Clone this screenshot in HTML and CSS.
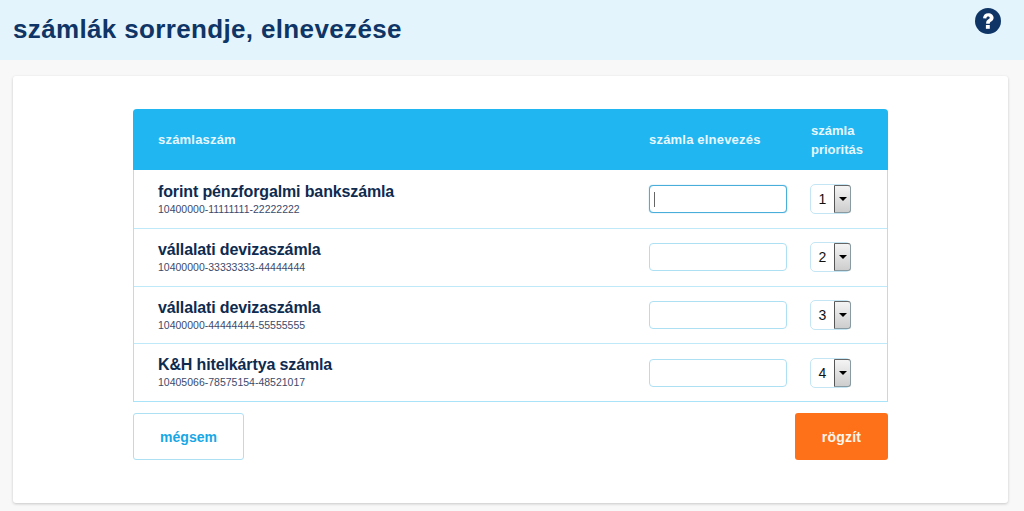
FILE: index.html
```html
<!DOCTYPE html>
<html lang="hu">
<head>
<meta charset="utf-8">
<title>számlák sorrendje, elnevezése</title>
<link rel="stylesheet" href="styles.css">
</head>
<body>
<header class="top">
  <h1 class="title">számlák sorrendje, elnevezése</h1>
  <svg class="help" viewBox="0 0 26 26" width="26" height="26" aria-label="súgó">
    <circle cx="13" cy="13" r="13" fill="#0f3566"/>
    <path d="M8 10.200C8.200 7.100 10.300 5.200 13.300 5.200c3 0 5.300 1.800 5.300 4.500 0 2-1.100 3-2.500 3.900-1 .7-1.300 1.100-1.300 2.200h-3.700c0-2.300.6-3.300 2-4.200 1-.7 1.600-1.100 1.600-1.800 0-.8-.7-1.300-1.500-1.300-1 0-1.700.6-1.900 1.900z" fill="#fff"/>
    <rect x="10.900" y="17" width="3.900" height="3.800" fill="#fff"/>
  </svg>
</header>
<main class="card">
  <section class="table">
    <div class="row head">
      <div class="c-acc">számlaszám</div>
      <div class="c-name">számla elnevezés</div>
      <div class="c-pri">számla<br>prioritás</div>
    </div>
    <div class="row row-1">
      <div class="c-acc"><div class="acc-name">forint pénzforgalmi bankszámla</div><div class="acc-no">10400000-11111111-22222222</div></div>
      <div class="c-name"><div class="field focus"><span class="caret"></span></div></div>
      <div class="c-pri"><div class="sel"><span class="val">1</span><span class="arrow"><i></i></span></div></div>
    </div>
    <div class="row row-2">
      <div class="c-acc"><div class="acc-name">vállalati devizaszámla</div><div class="acc-no">10400000-33333333-44444444</div></div>
      <div class="c-name"><div class="field"></div></div>
      <div class="c-pri"><div class="sel"><span class="val">2</span><span class="arrow"><i></i></span></div></div>
    </div>
    <div class="row row-3">
      <div class="c-acc"><div class="acc-name">vállalati devizaszámla</div><div class="acc-no">10400000-44444444-55555555</div></div>
      <div class="c-name"><div class="field"></div></div>
      <div class="c-pri"><div class="sel"><span class="val">3</span><span class="arrow"><i></i></span></div></div>
    </div>
    <div class="row row-4">
      <div class="c-acc"><div class="acc-name">K&amp;H hitelkártya számla</div><div class="acc-no">10405066-78575154-48521017</div></div>
      <div class="c-name"><div class="field"></div></div>
      <div class="c-pri"><div class="sel"><span class="val">4</span><span class="arrow"><i></i></span></div></div>
    </div>
  </section>
  <div class="actions">
    <button class="btn cancel" type="button">mégsem</button>
    <button class="btn save" type="button">rögzít</button>
  </div>
</main>
</body>
</html>
```

FILE: styles.css
```css
* { box-sizing: border-box; }
html, body { margin: 0; padding: 0; }
body {
  height: 511px;
  overflow: hidden;
  background: #f8f8f8;
  font-family: "Liberation Sans", Arial, sans-serif;
}
.top {
  height: 60px;
  background: #e3f4fc;
  display: flex;
  justify-content: space-between;
  align-items: flex-start;
  padding: 0 23px 0 13px;
}
.title {
  margin: 14px 0 0;
  font-size: 26px;
  line-height: 30px;
  font-weight: bold;
  letter-spacing: .35px;
  color: #0f3566;
}
.help { margin-top: 8px; }
.card {
  width: 995px;
  height: 427px;
  margin: 16px 0 0 13px;
  padding: 33px 120px 0;
  background: #fff;
  border-radius: 3px;
  box-shadow: 0 1px 3px rgba(0,0,0,.2);
}
.table {
  border: 1px solid #a9e3f9;
  border-top: 0;
  border-radius: 4px 4px 0 0;
  height: 293px;
}
.row {
  display: flex;
  align-items: center;
  border-bottom: 1px solid #bfe8f8;
}
.row-1 { height: 59px; }
.row-2 { height: 58px; padding-bottom: 1px; }
.row-3 { height: 57px; }
.row-4 { height: 57px; border-bottom: 0; }
.row.head {
  height: 61px;
  margin: 0 -1px;
  background: #1fb6f1;
  border: 0;
  border-radius: 4px 4px 0 0;
  color: #e8f7fd;
  font-size: 13px;
  font-weight: bold;
  line-height: 19px;
  letter-spacing: .2px;
}
.row.head .c-acc { padding-left: 25px; width: 516px; }
.row.head .c-name { width: 162px; }
.row.head .c-pri { letter-spacing: 0; }
.c-acc { width: 515px; padding-left: 24px; flex: none; }
.c-name { width: 161px; flex: none; }
.c-pri { flex: 1; }
.acc-name {
  font-size: 16px;
  line-height: 18px;
  font-weight: bold;
  letter-spacing: -.13px;
  color: #0e2b4f;
}
.acc-no {
  font-size: 10.5px;
  line-height: 14px;
  color: #3c4a6b;
  margin-top: 1px;
}
.field {
  width: 138px;
  height: 28px;
  border: 1px solid #aee0f4;
  border-radius: 4px;
  background: #fff;
  display: flex;
  align-items: center;
  padding-left: 4px;
}
.field.focus {
  border-color: #4aaedb;
  box-shadow: 0 0 1px #4aaedb;
}
.caret {
  width: 1px;
  height: 15px;
  background: #666;
}
.sel {
  width: 41px;
  height: 30px;
  border: 1px solid #c4e6f4;
  border-radius: 5px;
  display: flex;
  background: #fff;
}
.val {
  width: 23px;
  flex: none;
  font-size: 14px;
  line-height: 28px;
  text-align: center;
  color: #111;
}
.arrow {
  width: 17px;
  flex: none;
  border: 1px solid #8a9aa1;
  border-left-color: #555;
  border-top-color: #666;
  border-radius: 0 3px 3px 0;
  background: linear-gradient(#f4f4f4, #cdcdcd);
  display: flex;
  justify-content: center;
  padding-top: 11px;
}
.arrow i {
  width: 0;
  height: 0;
  border: 4px solid transparent;
  border-top: 4px solid #000;
  border-bottom: 0;
}
.actions {
  display: flex;
  justify-content: space-between;
  margin-top: 11px;
}
.btn {
  width: 111px;
  height: 47px;
  border-radius: 3px;
  font: bold 14px "Liberation Sans", Arial, sans-serif;
  padding: 0;
}
.cancel {
  background: #fff;
  border: 1px solid #aee0f4;
  color: #17a7e6;
}
.save {
  width: 93px;
  background: #ff7118;
  border: 0;
  color: #fff6ec;
  letter-spacing: .2px;
}
```
